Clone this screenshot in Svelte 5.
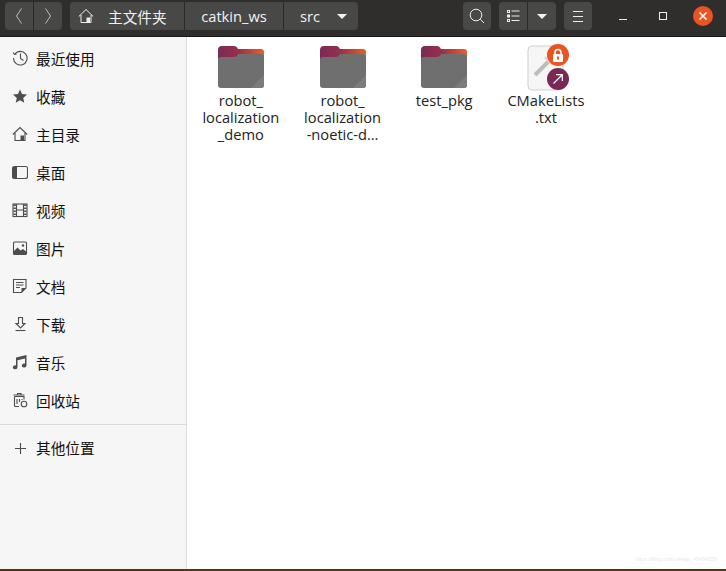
<script>
  const places = [
    { n: '最近使用', d: '<path d="M2.600 4.500A6.800 6.800 0 1 1 1.500 8"/><path d="M8.500 3.500v5l3 2"/><path d="M1 2.500l1.500 2 2-.5" />' },
    { n: '收藏', d: '<path fill="#4d4d4d" stroke="none" d="M8 1.500l2 4.600 5 .5-3.800 3.300 1.100 4.900L8 12.300l-4.300 2.500 1.100-4.900L1 6.600l5-.5z"/>' },
    { n: '主目录', d: '<path d="M.8 8.500L8 1.500l7.200 7"/><path d="M3 7v7.500h10V7"/><path fill="#4d4d4d" stroke="none" d="M8.500 9.500H12v5H8.500z"/>' },
    { n: '桌面', d: '<rect x=".5" y="2.500" width="15" height="12" rx="2"/><path fill="#4d4d4d" stroke="none" d="M.5 4.500a2 2 0 0 1 2-2h2.500v12H2.500a2 2 0 0 1-2-2z"/>' },
    { n: '视频', d: '<rect x="1" y="2" width="14" height="12.500" /><path d="M4.500 2v12.500M11.500 2v12.500M4.500 8h7"/><path stroke-width="2.400" stroke-dasharray="1.500 1.500" d="M2.700 2.500v12M13.300 2.500v12"/>' },
    { n: '图片', d: '<rect x="1.500" y="2" width="13" height="12.500" rx="1"/><path fill="#4d4d4d" stroke="none" d="M2 14V11l3.500-3.500 3 3L11 9l3 2.500V14z"/><circle cx="11" cy="5.500" r="1.200" fill="#4d4d4d" stroke="none"/>' },
    { n: '文档', d: '<path d="M1.500 1.500h12.500V10l-4.500 4.500h-8z"/><path d="M4 4.500h7.500M4 7h7.500M4 9.500h4"/><path fill="#4d4d4d" stroke="none" d="M9.500 10H14l-4.500 4.500z"/>' },
    { n: '下载', d: '<path d="M6.500 1.500h4v6H13L8.500 12 4 7.500h2.500z"/><path d="M3.500 14.500h10"/>' },
    { n: '音乐', d: '<path fill="#4d4d4d" stroke="none" d="M4 3.500L14.500 1v10.500a2.300 2 0 1 1-1.500-1.900V4.600L5.500 6.300v7a2.300 2 0 1 1-1.500-1.900z"/>' },
    { n: '回收站', d: '<path d="M2.500 4.500h9.500v3M2.500 4.500v9a1 1 0 0 0 1 1h3.500"/><path d="M1.500 3h11M5.500 3V1.500h3.500V3"/><path d="M5 7v5M7.500 7v3M10 7v1"/><circle cx="12" cy="12" r="2.800"/>' }
  ];
  const files = [
    { lines: ['robot_', 'localization', '_demo'] },
    { lines: ['robot_', 'localization', '-noetic-d…'] },
    { lines: ['test_pkg'] }
  ];
</script>

<div class="win">
  <header class="bar">
    <div class="group nav">
      <button class="b w28" aria-label="back"><svg class="chev" width="16" height="16" viewBox="0 0 16 16"><path d="M10.500 .5L5.500 8l5 7.500" /></svg></button>
      <button class="b w29" aria-label="forward"><svg class="chev" width="16" height="16" viewBox="0 0 16 16"><path d="M5.500 .5l5 7.500-5 7.500" /></svg></button>
    </div>
    <div class="group path">
      <button class="b crumb home">
        <svg class="homeicon" width="16" height="16" viewBox="0 0 16 16"><path d="M.8 8.500L8 1.500l7.200 7"/><path d="M3 7v7.500h10V7"/><path class="solid" d="M8.500 9.500H12v5H8.500z"/></svg>
        <span class="cjk">主文件夹</span>
      </button>
      <button class="b crumb cw">catkin_ws</button>
      <button class="b crumb src"><span>src</span><i class="caret"></i></button>
    </div>
    <div class="spacer"></div>
    <button class="b single" aria-label="search"><svg width="18" height="18" viewBox="0 0 18 18"><circle cx="8" cy="8" r="5.800"/><path d="M12.300 12.300L16 16"/></svg></button>
    <div class="group view">
      <button class="b w28" aria-label="list"><svg width="13" height="12" viewBox="0 0 13 12"><rect x=".5" y=".5" width="2" height="2"/><rect x=".5" y="5" width="2" height="2"/><rect x=".5" y="9.500" width="2" height="2"/><path d="M4.500 1h8M4.500 6h8M4.500 10.500h8"/></svg></button>
      <button class="b w29" aria-label="view options"><i class="caret"></i></button>
    </div>
    <button class="b single" aria-label="menu"><svg width="10" height="11" viewBox="0 0 10 11"><path d="M0 .5h10M0 5.500h10M0 10.500h10"/></svg></button>
    <div class="wm">
      <svg width="10" height="10" viewBox="0 0 10 10"><path d="M1 8.500h8"/></svg>
      <svg width="10" height="10" viewBox="0 0 10 10"><rect x="1.500" y="1.500" width="7" height="7"/></svg>
      <span class="close"><svg width="10" height="10" viewBox="0 0 10 10"><path d="M1.500 1.500l7 7M8.500 1.500l-7 7"/></svg></span>
    </div>
  </header>

  <div class="body">
    <aside class="side">
      <ul class="list">
        {#each places as p}
          <li class="row">
            <svg class="ico" width="16" height="16" viewBox="0 0 16 16">{@html p.d}</svg>
            <span>{p.n}</span>
          </li>
        {/each}
      </ul>
      <div class="sep"></div>
      <div class="row other">
        <svg class="ico" width="16" height="16" viewBox="0 0 16 16"><path d="M8.500 3v11M3 8.500h11"/></svg>
        <span>其他位置</span>
      </div>
    </aside>

    <main class="main">
      <div class="grid">
        {#each files as f}
          <div class="item">
            <svg class="folder" width="48" height="44" viewBox="0 0 48 44">
              <path d="M1 5a4 4 0 0 1 4-4h12c2 0 3 1 4 3h23a3 3 0 0 1 3 3v14H1z" fill="url(#tab)"/>
              <path d="M1 15a3 3 0 0 1 3-3h13c2 0 3-1 4-3h23a3 3 0 0 1 3 3V40a3 3 0 0 1-3 3H4a3 3 0 0 1-3-3z" fill="#6f6f6f"/>
              <path d="M47 30v10a3 3 0 0 1-3 3H34z" fill="#7c7c7c"/>
              <defs>
                <linearGradient id="tab" x1="0" y1="0" x2="1" y2="0">
                  <stop offset="0" stop-color="#7a2a58"/><stop offset=".45" stop-color="#96304c"/><stop offset="1" stop-color="#ec5f22"/>
                </linearGradient>
              </defs>
            </svg>
            <div class="label">{#each f.lines as l}<div>{l}</div>{/each}</div>
          </div>
        {/each}
        <div class="item">
          <div class="fileicon">
            <svg width="42" height="48" viewBox="0 0 42 48">
              <rect x="1" y="2" width="35" height="44" rx="4" fill="#f6f6f6" stroke="#cfcfcf"/>
              <path d="M8 31l14-14" stroke="#bdbdbd" stroke-width="4"/>
              <path d="M18 13l7 7" stroke="#dcdcdc" stroke-width="3"/>
            </svg>
            <span class="emblem lock">
              <svg width="14" height="15" viewBox="0 0 14 15"><rect x="2" y="6" width="10" height="8" rx="1" fill="#fff"/><path d="M4 7V4.500a3 3 0 0 1 6 0V7" fill="none" stroke="#fff" stroke-width="1.600"/><rect x="6" y="8.500" width="2" height="3" fill="#e95420"/></svg>
            </span>
            <span class="emblem link">
              <svg width="14" height="14" viewBox="0 0 14 14"><path d="M2.500 11.500L11 3M5 2.700h6.300V9" fill="none" stroke="#fff" stroke-width="1.200"/></svg>
            </span>
          </div>
          <div class="label"><div>CMakeLists</div><div>.txt</div></div>
        </div>
      </div>
      <div class="water">https://blog.csdn.net/qq_45494259</div>
    </main>
  </div>
  <div class="foot"></div>
</div>

<style>
  :global(body) { margin: 0; background: #fff; }
  .win { width: 726px; height: 571px; display: flex; flex-direction: column; overflow: hidden; font-family: "Open Sans", "Noto Sans CJK SC", sans-serif; }

  .bar { flex: none; height: 37px; box-sizing: border-box; background: #2f2e2d; border-bottom: 1px solid #1a1918; display: flex; align-items: flex-start; padding: 2px 0 0 5px; }
  .group { display: flex; height: 28px; border-radius: 4px; overflow: hidden; gap: 1px; background: #2b2a29; }
  .b { height: 28px; border: 0; padding: 0; margin: 0; background: #484847; color: #f2f2f2; display: flex; align-items: center; justify-content: center; font: inherit; font-size: 14.67px; }
  .w28 { width: 28px; }
  .w29 { width: 28px; }
  .nav { width: 57px; }
  .path { margin-left: 8px; width: 288px; }
  .crumb { flex: none; }
  .home { width: 114px; justify-content: flex-start; padding-left: 8px; box-sizing: border-box; }
  .homeicon { margin-right: 14px; }
  .cjk { font-family: "Noto Sans CJK SC", sans-serif; letter-spacing: 0; }
  .cw { width: 98px; }
  .src { width: 74px; justify-content: flex-start; padding-left: 16px; box-sizing: border-box; }
  .src .caret { margin-left: 17px; }
  .caret { display: block; width: 0; height: 0; border-left: 5px solid transparent; border-right: 5px solid transparent; border-top: 5px solid #f2f2f2; }
  .spacer { flex: 1; }
  .single { width: 28px; border-radius: 4px; }
  .view { width: 57px; margin: 0 8px; }

  .bar svg path, .bar svg circle, .bar svg rect { fill: none; stroke: #eeeeec; stroke-width: 1; }
  .bar svg .solid { fill: #eeeeec; stroke: none; }
  .bar .chev path { stroke: #bdbdbb; }
  .wm { display: flex; align-items: center; width: 134px; height: 28px; box-sizing: border-box; padding-left: 26px; }
  .wm > svg:nth-child(2) { margin-left: 30px; }
  .close { width: 20px; height: 20px; border-radius: 50%; background: #e95420; display: flex; align-items: center; justify-content: center; margin-left: 25px; }
  .bar .close svg path { stroke: #fff; stroke-width: 1.600; }

  .body { flex: 1; display: flex; min-height: 0; }
  .side { flex: none; width: 186px; background: #f6f6f6; border-right: 1px solid #dcdcdc; padding-top: 2px; color: #111; font-family: "Noto Sans CJK SC", sans-serif; font-size: 14.67px; }
  .list { list-style: none; margin: 0; padding: 0; }
  .row { height: 38px; display: flex; align-items: center; padding-left: 12px; gap: 8px; }
  .ico { flex: none; fill: none; stroke: #4d4d4d; stroke-width: 1.100; }
  .sep { height: 1px; background: #dcdcdc; margin-top: 5px; }
  .other { height: 45px; }

  .main { flex: 1; display: flex; flex-direction: column; background: #fff; }
  .grid { display: grid; grid-template-columns: repeat(4, 101.700px); padding: 8px 0 0 3px; align-items: start; }
  .item { display: flex; flex-direction: column; align-items: center; color: #222; font-size: 14.67px; line-height: 17px; text-align: center; }
  .folder { height: 44px; margin-bottom: 3px; }
  .label { white-space: nowrap; }
  .fileicon { position: relative; width: 42px; height: 48px; left: 2px; top: -1px; margin-bottom: -1px; }
  .fileicon > svg { display: block; }
  .emblem { position: absolute; width: 22px; height: 22px; border-radius: 50%; display: flex; align-items: center; justify-content: center; left: 20px; }
  .lock { background: #e95420; top: 0; }
  .link { background: #7b2855; top: 24px; }
  .water { margin-top: auto; align-self: flex-end; margin-right: 9px; margin-bottom: 7px; font-size: 5.300px; color: #e9e9e9; white-space: nowrap; font-family: "Liberation Sans", sans-serif; }
  .foot { flex: none; height: 2px; background: #5c3012; }
</style>
